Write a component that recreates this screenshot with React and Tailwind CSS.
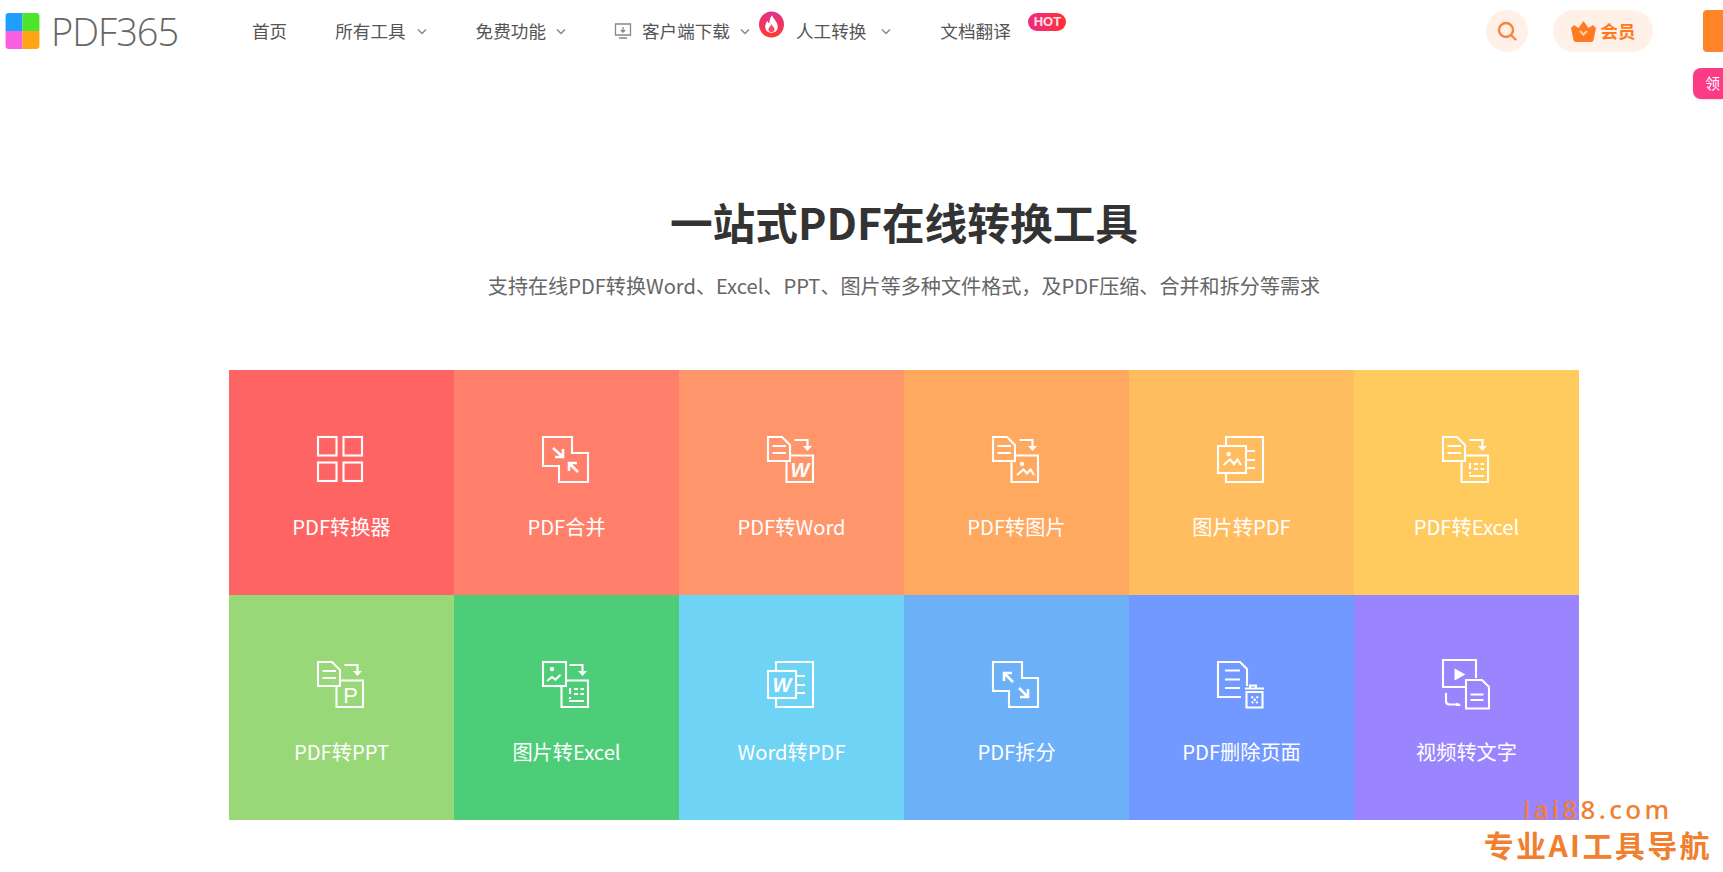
const Doc = () => (
  <>
    <path d="M1 1H15L23 9V25H1Z" />
    <path d="M5.5 10H19M5.5 17H19" />
  </>
)

const Arrow = () => (
  <>
    <path d="M27.5 4H40.5V11" />
    <path d="M36 10H45L40.5 15Z" fill="#fff" stroke="none" />
  </>
)

const Box = () => <path d="M24 19.5H46V46H19.5V26" />

const ListRows = () => (
  <path d="M28 27V33M28 36V38M32 28H36M38.5 28H42M32 33H36M38.5 33H42M27 40H42" />
)

const Mount = () => (
  <>
    <circle cx="30" cy="28" r="2.2" fill="#fff" stroke="none" />
    <path d="M25 39L31.5 33.5L35 37.5L38.5 33.5L42 39" />
  </>
)

const Page = () => <path d="M9 9V1H46V46H9V38M30 15H38M30 24H38M30 32H38" />

const Letter = ({ x, y, size, italic, children }) => (
  <text
    x={x}
    y={y}
    fontSize={size}
    fontStyle={italic ? 'italic' : 'normal'}
    fontWeight={italic ? 'bold' : 'normal'}
    fontFamily="'Liberation Sans', sans-serif"
    textAnchor="middle"
    fill="#fff"
    stroke="none"
  >
    {children}
  </text>
)

const icons = {
  grid: (
    <>
      <rect x="1" y="1" width="18.5" height="18.5" />
      <rect x="26.5" y="1" width="18.5" height="18.5" />
      <rect x="1" y="26.5" width="18.5" height="18.5" />
      <rect x="26.5" y="26.5" width="18.5" height="18.5" />
    </>
  ),
  merge: (
    <>
      <path d="M1 1H30V17H46V46H17V30H1Z" />
      <path d="M11 12L21 21M21 13V21H13M36 36L27 27M27 35V27H35" strokeWidth="2.6" />
    </>
  ),
  word: (
    <>
      <Doc />
      <Arrow />
      <Box />
      <Letter x="33" y="41" size="20" italic>W</Letter>
    </>
  ),
  image: (
    <>
      <Doc />
      <Arrow />
      <Box />
      <Mount />
    </>
  ),
  imgPdf: (
    <>
      <Page />
      <rect x="1" y="10" width="28" height="27" />
      <circle cx="11.7" cy="18" r="2.2" fill="#fff" stroke="none" />
      <path d="M6.5 29L13 23.5L17 28L20.5 23.5L24 29" />
    </>
  ),
  excel: (
    <>
      <Doc />
      <Arrow />
      <Box />
      <ListRows />
    </>
  ),
  ppt: (
    <>
      <Doc />
      <Arrow />
      <Box />
      <Letter x="33.5" y="41.5" size="22">P</Letter>
    </>
  ),
  imgExcel: (
    <>
      <rect x="1" y="1" width="23" height="24" />
      <circle cx="10" cy="8" r="2.2" fill="#fff" stroke="none" />
      <path d="M5 20L10 16L13.5 18.7L18.5 13.7" />
      <Arrow />
      <Box />
      <ListRows />
    </>
  ),
  wordPdf: (
    <>
      <Page />
      <rect x="1" y="10" width="28" height="27" />
      <Letter x="15" y="31" size="20" italic>W</Letter>
    </>
  ),
  split: (
    <>
      <path d="M1 1H30V17H46V46H17V30H1Z" />
      <path d="M21 21L12 12M12 20V12H20M27 27L36 36M36 28V36H28" strokeWidth="2.6" />
    </>
  ),
  remove: (
    <>
      <path d="M24 36H1V1H23L30 8V25" />
      <path d="M8 9.5H23M8 18.5H23M8 27H23" />
      <path d="M28 27.5H47M33 27V24.5H39V27" />
      <path d="M29.5 31H45.5V46.5H29.5Z" />
      <path d="M34.5 35.5L41 42.5M41 35.5L34.5 42.5" strokeDasharray="2 1.5" />
    </>
  ),
  video: (
    <>
      <path d="M24 26H1V-1H34V17" />
      <path d="M12.5 7.5L23.5 13.5L12.5 19.5Z" fill="#fff" stroke="none" />
      <path d="M24 19H40L47 26V47.5H24Z" />
      <path d="M28.5 33.5H41.5M28.5 39H41.5" />
      <path d="M4 32V40Q4 43.5 7.5 43.5H18" />
      <path d="M14 41.5L19 45H14Z" fill="#fff" stroke="none" />
    </>
  ),
}

const tiles = [
  { label: 'PDF转换器', icon: 'grid', bg: 'bg-[#ff6464]' },
  { label: 'PDF合并', icon: 'merge', bg: 'bg-[#ff7f6b]' },
  { label: 'PDF转Word', icon: 'word', bg: 'bg-[#ff956b]' },
  { label: 'PDF转图片', icon: 'image', bg: 'bg-[#ffa860]' },
  { label: '图片转PDF', icon: 'imgPdf', bg: 'bg-[#ffbd60]' },
  { label: 'PDF转Excel', icon: 'excel', bg: 'bg-[#ffcb5f]' },
  { label: 'PDF转PPT', icon: 'ppt', bg: 'bg-[#98d878]' },
  { label: '图片转Excel', icon: 'imgExcel', bg: 'bg-[#4ecd78]' },
  { label: 'Word转PDF', icon: 'wordPdf', bg: 'bg-[#6fd3f5]' },
  { label: 'PDF拆分', icon: 'split', bg: 'bg-[#6cb1f8]' },
  { label: 'PDF删除页面', icon: 'remove', bg: 'bg-[#7299ff]' },
  { label: '视频转文字', icon: 'video', bg: 'bg-[#9a85ff]' },
]

const Chevron = ({ className }) => (
  <svg width="10" height="7" viewBox="0 0 10 7" fill="none" stroke="#888" strokeWidth="1.5" className={className}>
    <path d="M1 1.5L5 5.5L9 1.5" />
  </svg>
)

function App() {
  return (
    <div className="relative h-[872px] overflow-hidden bg-white font-['Noto_Sans_CJK_SC','Liberation_Sans',sans-serif]">
      <header className="flex h-[62px] items-center text-[17.6px] text-[#555]">
        <svg width="35" height="36" viewBox="0 0 32 34" className="ml-[5px] shrink-0">
          <path d="M3 0H16V17H0V3Q0 0 3 0Z" fill="#1e9fff" />
          <path d="M16 0H29Q32 0 32 3V17H16Z" fill="#4ce52a" />
          <path d="M0 17H16V34H3Q0 34 0 31Z" fill="#f95fe0" />
          <path d="M16 17H32V31Q32 34 29 34H16Z" fill="#ffa412" />
        </svg>
        <span className="ml-[11px] w-[201px] font-['Open_Sans',sans-serif] text-[38px] font-light tracking-[-1px] text-[#666]">PDF365</span>

        <a>首页</a>
        <a className="ml-[48px]">所有工具</a>
        <Chevron className="ml-[11px]" />
        <a className="ml-[49px]">免费功能</a>
        <Chevron className="ml-[10px]" />
        <svg width="18" height="18" viewBox="0 0 18 18" fill="none" stroke="#888" strokeWidth="1.3" className="ml-[48px]">
          <path d="M1.5 2H16.5V13H1.5ZM5 16H13M9 5V10M6.8 8L9 10.2L11.2 8" />
        </svg>
        <a className="ml-[10px]">客户端下载</a>
        <Chevron className="ml-[10px]" />
        <svg width="25" height="27" viewBox="0 0 24 25" className="mb-[13px] ml-[9px]">
          <defs>
            <linearGradient id="fire" x1="0" y1="0" x2="0" y2="1">
              <stop offset="0" stopColor="#e0308f" />
              <stop offset="1" stopColor="#ff3b30" />
            </linearGradient>
          </defs>
          <ellipse cx="12" cy="12.5" rx="12" ry="12.5" fill="url(#fire)" />
          <path d="M12.5 3.5C13.5 7 18 9.5 18 14.5C18 18.5 15.5 20.5 12 20.5C8.5 20.5 6 18.5 6 14.5C6 12 7.2 10.5 8.2 9.2C8.6 10.5 9.2 11.2 10 11.5C10 8.5 10.8 5.5 12.5 3.5Z" fill="#fff" />
          <path d="M12 12C12.5 14 15 15 15 17.3C15 19 13.6 20 12 20C10.4 20 9 19 9 17.3C9 15.5 11 14.5 12 12Z" fill="#fa4a6a" />
        </svg>
        <a className="ml-[12px]">人工转换</a>
        <Chevron className="ml-[15px]" />
        <a className="relative ml-[49px]">
          文档翻译
          <span className="absolute left-[88px] top-[-5px] flex h-[18px] w-[38px] items-center justify-center rounded-[9px] bg-gradient-to-r from-[#f0287c] to-[#ff3030] font-['Liberation_Sans',sans-serif] text-[13px] font-bold leading-none text-white/85">HOT</span>
        </a>

        <button className="ml-auto flex h-[42px] w-[42px] items-center justify-center rounded-full bg-[#fff1e8]">
          <svg width="20" height="20" viewBox="0 0 20 20" fill="none" stroke="#fb8442" strokeWidth="2.4" strokeLinecap="round">
            <circle cx="9" cy="9" r="7" />
            <path d="M14.5 14.5L18.5 18.5" />
          </svg>
        </button>
        <button className="ml-[25px] flex h-[42px] w-[100px] items-center justify-center gap-[5px] rounded-full bg-[#fff1e8] text-[17.5px] font-bold text-[#ff7a1e]">
          <svg width="25" height="21" viewBox="0 0 25 21">
            <path d="M12.5 0L17.5 7L22 4L25 7L22.5 19Q22.2 21 20 21H5Q2.8 21 2.5 19L0 7L3 4L7.5 7Z" fill="#ff7a22" />
            <path d="M9 10L12.5 13.5L16 10" fill="none" stroke="#ffd0a8" strokeWidth="2" />
          </svg>
          会员
        </button>
        <div className="ml-[50px] h-[42px] w-[20px] rounded-l-[4px] bg-[#ff8528]" />
      </header>

      <div className="absolute right-0 top-[68px] flex h-[31px] w-[30px] items-center rounded-l-[8px] bg-[#fc3b86] pl-[12px] text-[15px] text-white shadow-sm whitespace-nowrap">
        领
      </div>

      <main className="ml-[229px] w-[1350px]">
        <h1 className="mt-[138px] text-center text-[42.7px] font-bold leading-[42px] text-[#333]">一站式PDF在线转换工具</h1>
        <p className="mt-[30px] text-center text-[20.1px] leading-[28px] text-[#666]">
          支持在线PDF转换Word、Excel、PPT、图片等多种文件格式，及PDF压缩、合并和拆分等需求
        </p>
        <div className="mt-[70px] grid grid-cols-6">
          {tiles.map((t) => (
            <a key={t.label} className={`flex h-[225px] flex-col items-center pt-[66px] ${t.bg}`}>
              <svg
                width="50"
                height="50"
                viewBox="0 0 50 50"
                fill="none"
                stroke="#fff"
                strokeWidth="2.1"
                className="overflow-visible"
              >
                {icons[t.icon]}
              </svg>
              <span className="mt-[26px] text-[20.2px] leading-[30px] text-white">{t.label}</span>
            </a>
          ))}
        </div>
      </main>

      <div className="absolute bottom-[10px] right-[11px] flex flex-col items-center text-[#f08030]">
        <span className="font-['Noto_Sans',sans-serif] text-[26px] font-medium leading-[34px] tracking-[3.4px]">iai88.com</span>
        <span className="text-[30px] font-bold leading-[36px] tracking-[2.4px]">专业AI工具导航</span>
      </div>
    </div>
  )
}

export default App
